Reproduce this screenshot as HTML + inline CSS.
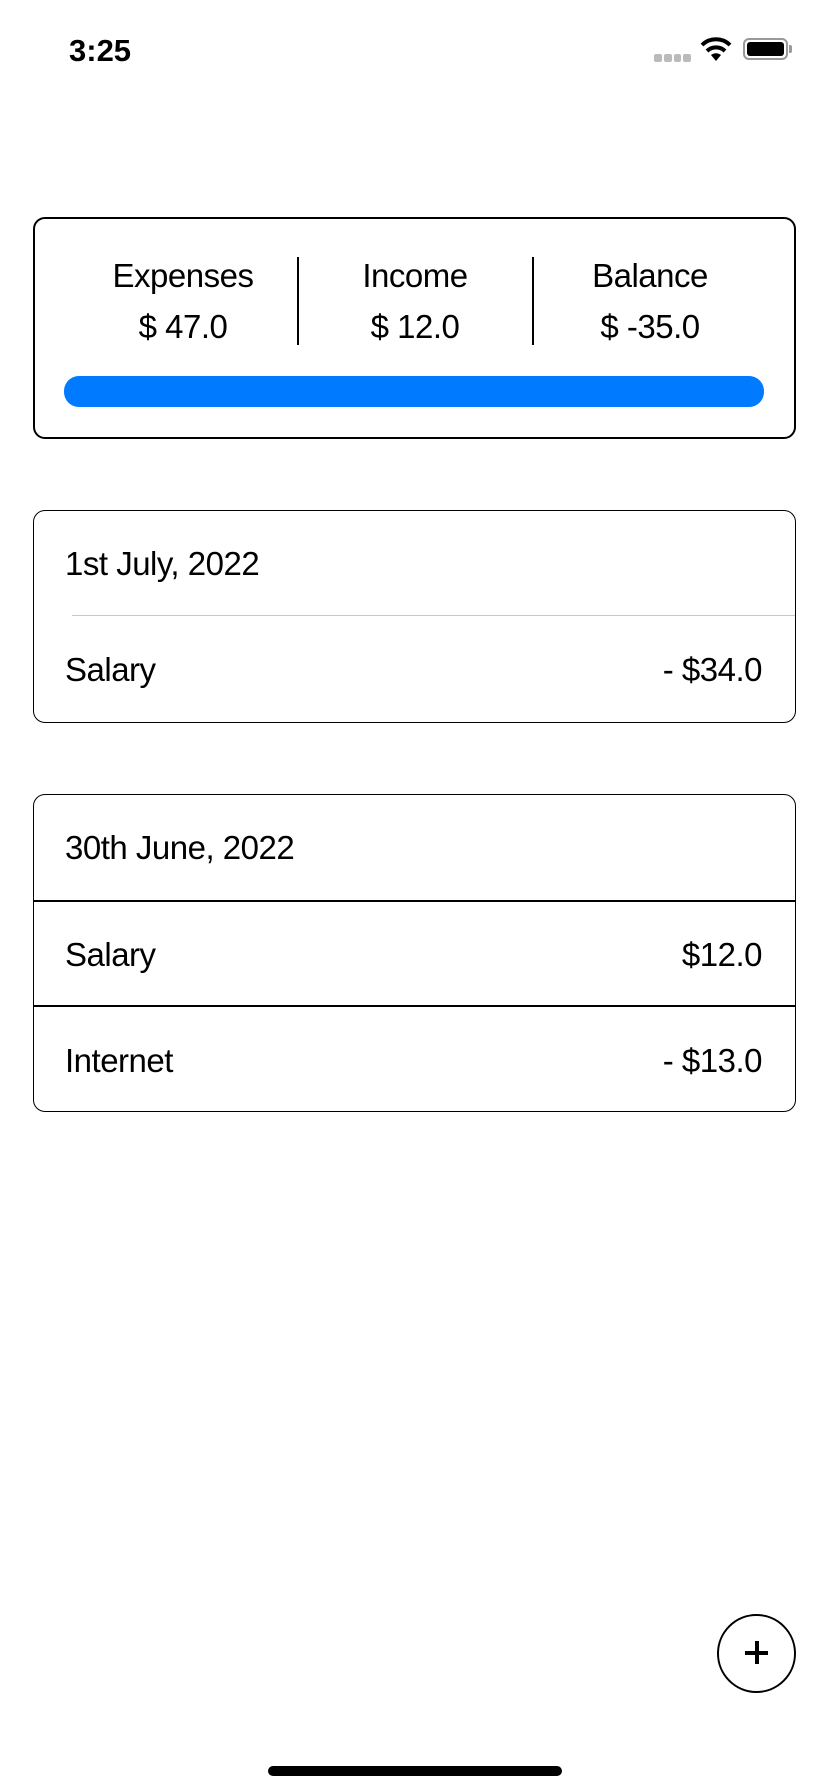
<!DOCTYPE html>
<html><head><meta charset="utf-8"><style>
*{margin:0;padding:0;box-sizing:border-box}
body{width:828px;height:1792px;background:#fff;position:relative;overflow:hidden;font-family:"Liberation Sans",sans-serif;color:#000}
.abs{position:absolute}
.t{font-size:33px;line-height:1;white-space:nowrap;letter-spacing:-0.5px}
.card{position:absolute;left:33px;width:763px;border:1.5px solid #000;border-radius:12px;overflow:hidden}
</style></head><body>
<div class="abs" style="left:69px;top:33px;font-size:31px;font-weight:bold;letter-spacing:0">3:25</div>
<div class="abs" style="left:654px;top:54px;width:37px;height:8px;display:flex;gap:2px">
<span style="flex:1;background:#bbb;border-radius:2px"></span><span style="flex:1;background:#bbb;border-radius:2px"></span><span style="flex:1;background:#bbb;border-radius:2px"></span><span style="flex:1;background:#bbb;border-radius:2px"></span></div>
<svg class="abs" style="left:700px;top:36px" width="32" height="26" viewBox="0 0 32 26"><path d="M16 25 L11 19 A8 8 0 0 1 21 19Z" fill="#000"/><path d="M7 15 A13 13 0 0 1 25 15" stroke="#000" stroke-width="4" fill="none"/><path d="M2 9 A20 20 0 0 1 30 9" stroke="#000" stroke-width="4" fill="none"/></svg>
<div class="abs" style="left:743px;top:38px;width:45px;height:22px;border:2px solid #999;border-radius:6px;padding:2px"><div style="width:100%;height:100%;background:#000;border-radius:3px"></div></div>
<div class="abs" style="left:789px;top:45px;width:3px;height:8px;background:#999;border-radius:0 2px 2px 0"></div>

<div class="card" style="top:217px;height:222px;border-width:2px">
<div class="abs" style="left:262px;top:38px;width:2px;height:88px;background:#000"></div>
<div class="abs" style="left:497px;top:38px;width:2px;height:88px;background:#000"></div>
<div class="abs t" style="left:48px;width:200px;text-align:center;top:40px">Expenses<br><span style="display:inline-block;margin-top:18px">$ 47.0</span></div>
<div class="abs t" style="left:280px;width:200px;text-align:center;top:40px">Income<br><span style="display:inline-block;margin-top:18px">$ 12.0</span></div>
<div class="abs t" style="left:515px;width:200px;text-align:center;top:40px">Balance<br><span style="display:inline-block;margin-top:18px">$ -35.0</span></div>
<div class="abs" style="left:29px;top:157px;width:700px;height:31px;background:#007aff;border-radius:15px"></div>
</div>

<div class="card" style="top:510px;height:213px">
<div class="abs t" style="left:31px;top:36px">1st July, 2022</div>
<div class="abs" style="left:38px;top:104px;right:0;height:1px;background:#c8c8c8"></div>
<div class="abs t" style="left:31px;top:142px">Salary</div>
<div class="abs t" style="right:33px;top:142px">- $34.0</div>
</div>

<div class="card" style="top:794px;height:318px">
<div class="abs t" style="left:31px;top:36px">30th June, 2022</div>
<div class="abs" style="left:0;top:105px;right:0;height:1.5px;background:#000"></div>
<div class="abs t" style="left:31px;top:143px">Salary</div>
<div class="abs t" style="right:33px;top:143px">$12.0</div>
<div class="abs" style="left:0;top:210px;right:0;height:1.5px;background:#000"></div>
<div class="abs t" style="left:31px;top:249px">Internet</div>
<div class="abs t" style="right:33px;top:249px">- $13.0</div>
</div>

<div class="abs" style="left:717px;top:1614px;width:79px;height:79px;border:2px solid #000;border-radius:50%"></div>
<div class="abs" style="left:745px;top:1651px;width:23px;height:4px;background:#000"></div>
<div class="abs" style="left:755px;top:1641px;width:4px;height:23px;background:#000"></div>
<div class="abs" style="left:268px;top:1766px;width:294px;height:10px;background:#000;border-radius:5px"></div>
</body></html>
